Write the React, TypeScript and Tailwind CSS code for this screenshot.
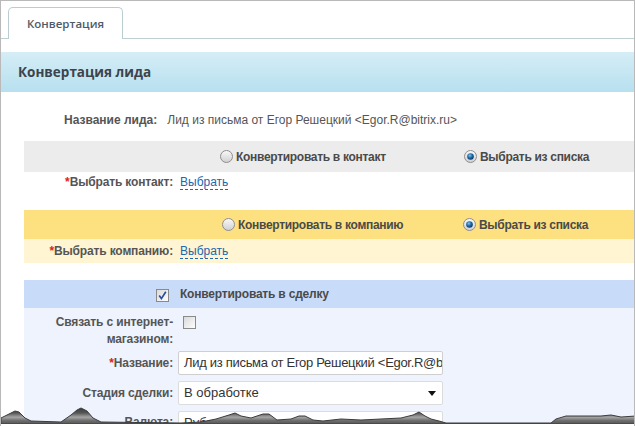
import React from "react";

const Radio = ({ checked }: { checked?: boolean }) => (
  <svg width="13" height="13" viewBox="0 0 13 13" className="shrink-0">
    <defs>
      <linearGradient id={checked ? "rgc" : "rgu"} x1="0" y1="0" x2="0" y2="1">
        <stop offset="0" stopColor="#fafafa" />
        <stop offset="1" stopColor="#cfcfcf" />
      </linearGradient>
      <radialGradient id="rdot" cx="0.4" cy="0.35" r="0.7">
        <stop offset="0" stopColor="#7fc3ef" />
        <stop offset="0.5" stopColor="#1f6aa8" />
        <stop offset="1" stopColor="#0a2f55" />
      </radialGradient>
    </defs>
    <circle cx="6.5" cy="6.5" r="6" fill={`url(#${checked ? "rgc" : "rgu"})`} stroke="#8e8e8e" strokeWidth="1" />
    {checked && <circle cx="6.5" cy="6.5" r="3.3" fill="url(#rdot)" />}
  </svg>
);

const Checkbox = ({ checked }: { checked?: boolean }) => (
  <svg width="13" height="13" viewBox="0 0 13 13" className="shrink-0">
    <defs>
      <linearGradient id="cbg" x1="0" y1="0" x2="1" y2="1">
        <stop offset="0" stopColor="#d8d8d8" />
        <stop offset="1" stopColor="#ffffff" />
      </linearGradient>
    </defs>
    <rect x="0.5" y="0.5" width="12" height="12" fill="url(#cbg)" stroke="#8a8a8a" />
    {checked && (
      <path d="M3.2 6.6 L5.4 9.6 L9.8 2.8" fill="none" stroke="#2a4d9c" strokeWidth="1.7" />
    )}
  </svg>
);

const Label = ({ children, req }: { children: React.ReactNode; req?: boolean }) => (
  <div className="w-[149px] shrink-0 text-right font-bold text-[#555555] tracking-[-0.15px]">
    {req && <span className="text-[#e02020]">*</span>}
    {children}
  </div>
);

const Link = () => (
  <span className="text-[#2067b0] border-b border-dashed border-[#2067b0] leading-[15px]">Выбрать</span>
);

const TORN =
  "M0 418 L8 414 L14 411 L18 412 L24 418 L30 421 L60 422 L70 415 L76 410 L80 408 L86 411 L92 418 L100 422 L180 423 L200 422 L215 419 L228 415 L234 413 L240 416 L250 418 L262 414 L268 414 L276 420 L290 419 L298 416 L304 416 L312 420 L322 421 L340 419 L360 420 L380 419 L400 418 L412 415 L418 412 L424 416 L430 419 L438 421 L445 423 L550 423 L555 419 L565 416 L600 416 L610 415 L620 417 L635 416 L635 424 L0 424 Z";

const TornEdge = () => (
  <svg className="absolute left-0 bottom-0" width="635" height="20" viewBox="0 406 635 20">
    <defs>
      <linearGradient id="tear" x1="0" y1="407" x2="0" y2="424" gradientUnits="userSpaceOnUse">
        <stop offset="0" stopColor="#3a3a3a" />
        <stop offset="0.35" stopColor="#555555" />
        <stop offset="0.6" stopColor="#a5a5a5" />
        <stop offset="0.8" stopColor="#6e6e6e" />
        <stop offset="1" stopColor="#555555" />
      </linearGradient>
    </defs>
    <path d={TORN} fill="url(#tear)" stroke="#3c3c3c" strokeWidth="1" strokeLinejoin="round" />
    <rect x="0" y="424" width="635" height="2" fill="#ffffff" />
  </svg>
);

export default function App() {
  return (
    <div
      className="relative w-[635px] h-[426px] overflow-hidden bg-white border-t border-l border-r border-[#b9b9b9] text-[12px] text-[#555555]"
      style={{ fontFamily: '"Liberation Sans", Arial, sans-serif' }}
    >
      {/* Tabs */}
      <div className="h-[38px] border-b border-[#bdd0d3] flex items-end pl-[7px]">
        <div
          className="w-[115px] h-[32px] -mb-px bg-white border border-b-0 border-[#b9cdd1] rounded-t-[5px] flex items-center justify-center text-[11.5px] font-semibold text-[#4f5a69]"
          style={{ fontFamily: '"Open Sans", sans-serif' }}
        >
          Конвертация
        </div>
      </div>

      <div className="h-[13px]" />

      {/* Header */}
      <div
        className="h-[40px] bg-gradient-to-b from-[#d5edf6] to-[#b7e0ef] flex items-center pl-[17px] text-[13.5px] font-bold text-[#3c434d]"
        style={{ fontFamily: '"Open Sans", sans-serif' }}
      >
        Конвертация лида
      </div>

      {/* Lead name */}
      <div className="h-[49px] flex items-center pl-[63px] pt-[6px]">
        <span className="font-bold text-[#555]">Название лида:</span>
        <span className="ml-[10px] text-[#555]">Лид из письма от Егор Решецкий &lt;Egor.R@bitrix.ru&gt;</span>
      </div>

      <div className="pl-[23px]">
        {/* Contact */}
        <div className="h-[31px] bg-[#ececec] flex items-center font-bold text-[#4a4a4a] tracking-[-0.3px]">
          <div className="ml-[196px] w-[244px] flex items-center gap-[3px]">
            <Radio />
            <span>Конвертировать в контакт</span>
          </div>
          <div className="flex items-center gap-[3px]">
            <Radio checked />
            <span>Выбрать из списка</span>
          </div>
        </div>
        <div className="h-[38px] flex items-start pt-[1px]">
          <Label req>Выбрать контакт:</Label>
          <div className="ml-[7px]">
            <Link />
          </div>
        </div>

        {/* Company */}
        <div className="h-[29px] bg-[#fde180] flex items-center font-bold text-[#4a4a4a] tracking-[-0.3px]">
          <div className="ml-[198px] w-[241px] flex items-center gap-[3px]">
            <Radio />
            <span>Конвертировать в компанию</span>
          </div>
          <div className="flex items-center gap-[3px]">
            <Radio checked />
            <span>Выбрать из списка</span>
          </div>
        </div>
        <div className="h-[24px] bg-[#fff5d3] flex items-center">
          <Label req>Выбрать компанию:</Label>
          <div className="ml-[7px]">
            <Link />
          </div>
        </div>

        <div className="h-[17px]" />

        {/* Deal */}
        <div className="h-[28px] bg-[#c8dcfa] flex items-center font-bold text-[#4a4a4a] tracking-[-0.2px]">
          <div className="w-[145px] flex justify-end pt-[2px]">
            <Checkbox checked />
          </div>
          <span className="ml-[11px]">Конвертировать в сделку</span>
        </div>

        <div className="bg-[#eef3fd] h-[140px] pt-[6px]">
          <div className="flex items-start">
            <Label>
              <div className="leading-[17px]">Связать с интернет-</div>
              <div className="leading-[17px]">магазином:</div>
            </Label>
            <div className="ml-[10px] pt-[2px]">
              <Checkbox />
            </div>
          </div>

          <div className="flex items-center mt-[3px]">
            <Label req>Название:</Label>
            <div className="ml-[5px] w-[265px] h-[24px] bg-white border border-[#cfcfcf] rounded-[2px] flex items-center pl-[5px] overflow-hidden whitespace-nowrap text-[13px] tracking-[-0.3px] text-[#333]">
              Лид из письма от Егор Решецкий &lt;Egor.R@bitrix.ru&gt;
            </div>
          </div>

          <div className="flex items-center mt-[6px]">
            <Label>Стадия сделки:</Label>
            <div className="ml-[5px] w-[265px] h-[24px] bg-white border border-[#dcdcdc] rounded-[2px] flex items-center justify-between pl-[5px] pr-[6px] text-[13px] text-[#333]">
              <span>В обработке</span>
              <svg width="8" height="5" viewBox="0 0 8 5">
                <path d="M0 0 L8 0 L4 5 Z" fill="#111" />
              </svg>
            </div>
          </div>

          <div className="flex items-start mt-[6px]">
            <Label>
              <div className="pt-[2px]">Валюта:</div>
            </Label>
            <div className="ml-[5px] w-[265px] h-[24px] bg-white border border-[#dcdcdc] rounded-[2px] flex items-start pt-[1px] pl-[5px] text-[13px] text-[#333]">
              Рубль
            </div>
          </div>
        </div>
      </div>

      <TornEdge />
    </div>
  );
}
